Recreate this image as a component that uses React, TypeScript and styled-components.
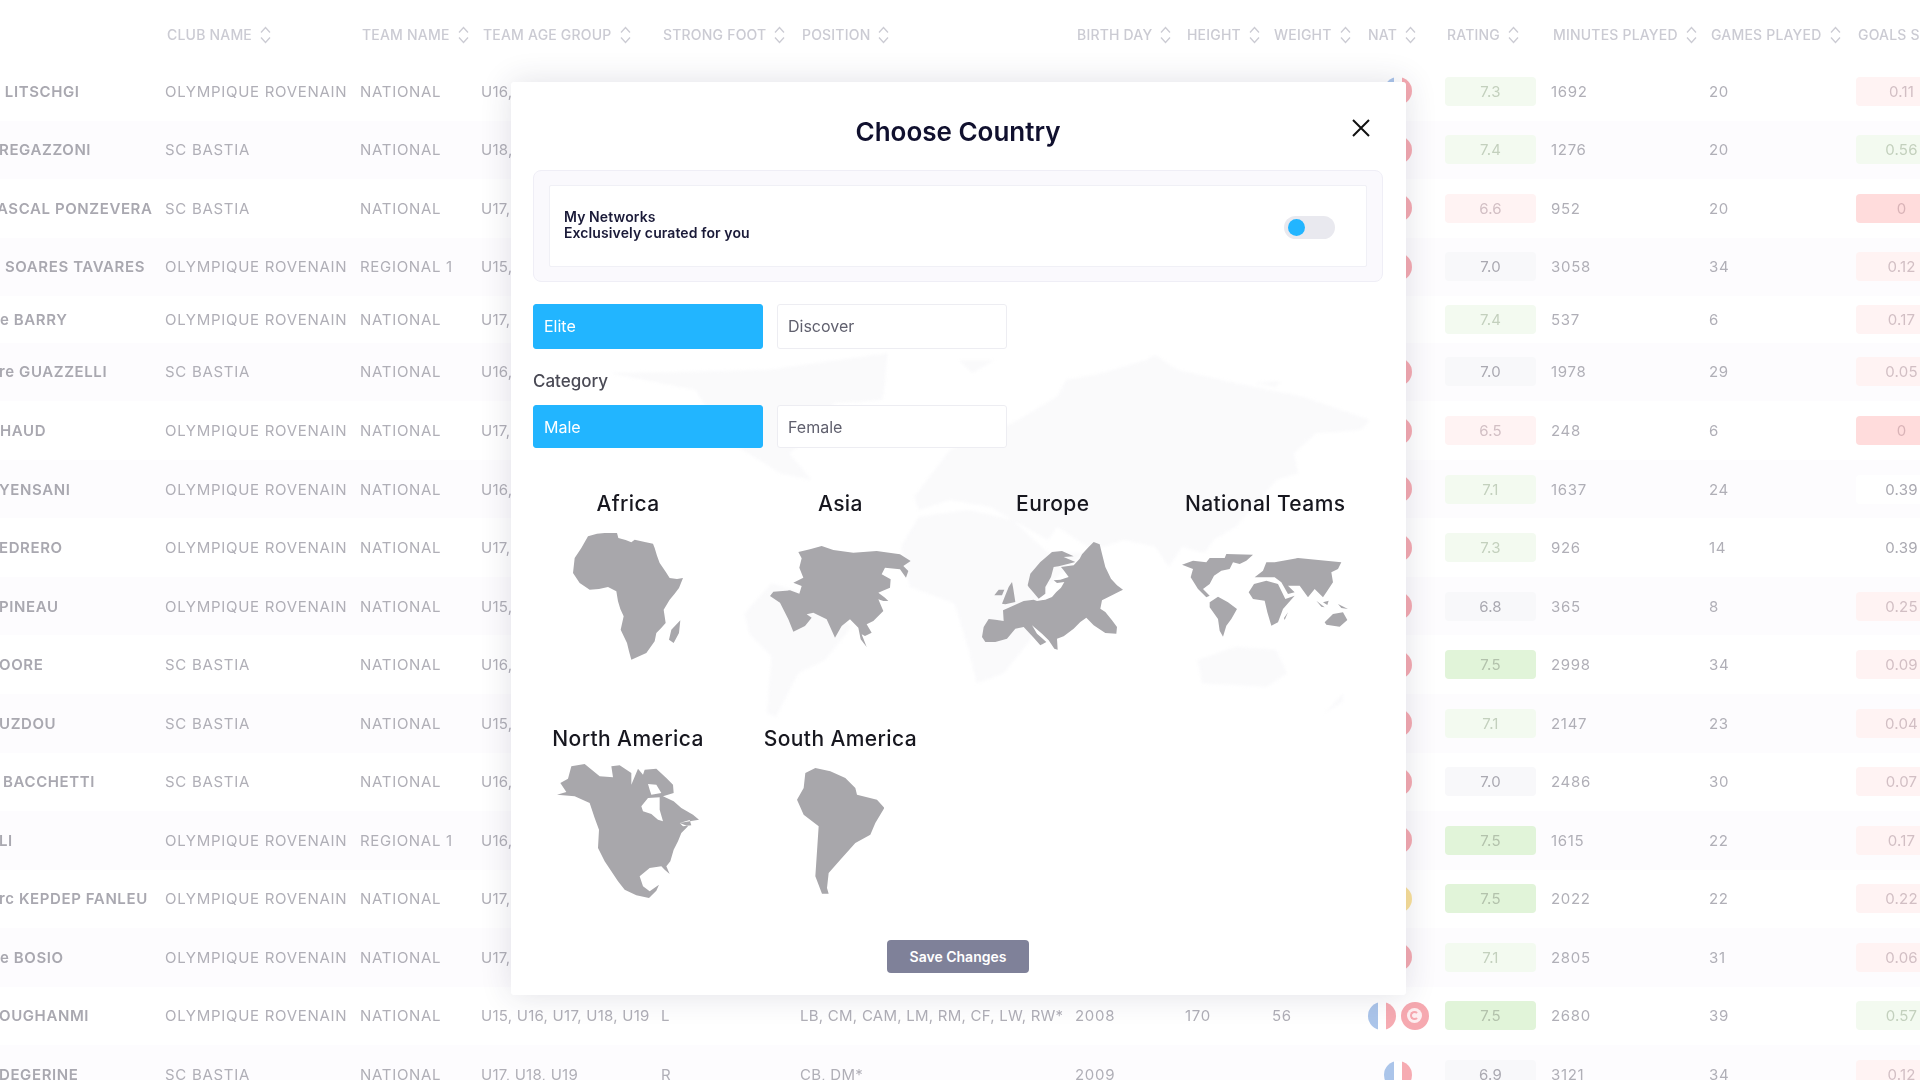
import React from "react";
import styled, { createGlobalStyle } from "styled-components";

const Global = createGlobalStyle`
  html, body { margin: 0; padding: 0; background: #fff; }
  body { font-family: Inter, "Noto Sans", "Liberation Sans", sans-serif; }
`;

const Page = styled.div`
  position: relative;
  width: 1920px;
  height: 1080px;
  overflow: hidden;
  background: #fff;
`;

const Table = styled.div`
  width: 1920px;
  filter: blur(0.5px);
`;

const columns = "165px 195px 121px 180px 139px 275px 110px 87px 94px 79px 106px 158px 147px 64px";

const HeadRow = styled.div`
  display: grid;
  grid-template-columns: ${columns};
  height: 62px;
  padding-top: 25.5px;
  box-sizing: border-box;
`;

const HeadCell = styled.div`
  display: flex;
  align-items: flex-start;
  gap: 7px;
  padding-left: 2px;
  font-size: 14px;
  letter-spacing: 0.2px;
  line-height: 18px;
  font-weight: 500;
  color: #cbcbd3;
  white-space: nowrap;
`;

const Row = styled.div<{ $short?: boolean; $even: boolean }>`
  display: grid;
  grid-template-columns: ${columns};
  align-items: center;
  height: ${(p) => (p.$short ? "46.5px" : "58.55px")};
  background: ${(p) => (p.$even ? "#fdfcfe" : "#ffffff")};
  font-size: 15px;
  letter-spacing: 0.7px;
  color: #b0afb7;
  white-space: nowrap;
`;

const NameCell = styled.div`
  overflow: hidden;
`;

const NameText = styled.span<{ $cut: number }>`
  display: block;
  margin-left: ${(p) => -p.$cut}px;
  font-weight: 600;
  letter-spacing: 0.6px;
  color: #a9a8b0;
`;

const Cell = styled.div`
  min-width: 0;
`;

const ListCell = styled.div`
  min-width: 0;
  letter-spacing: 0.25px;
`;

const Flags = styled.div`
  display: flex;
  justify-content: center;
  gap: 5px;
  width: 62px;
  margin-left: 1px;
`;

const Flag = styled.div<{ $kind: "fr" | "tn" | "cm" }>`
  display: flex;
  align-items: center;
  justify-content: center;
  width: 28px;
  height: 28px;
  border-radius: 50%;
  flex: none;
  background: ${(p) =>
    p.$kind === "fr"
      ? "linear-gradient(90deg,#abc5ea 0 36%,#fff 36% 66%,#f6abb2 66%)"
      : p.$kind === "tn"
      ? "#f6a9b0"
      : "linear-gradient(90deg,#a7d8b5 0 34%,#f4a9ae 34% 66%,#fbe29a 66%)"};
`;

const Emblem = styled.div`
  display: flex;
  align-items: center;
  justify-content: center;
  width: 15px;
  height: 15px;
  border-radius: 50%;
  background: #fdeef0;
`;

const Crescent = styled.div`
  width: 9px;
  height: 9px;
  border-radius: 50%;
  border: 2px solid #f6a9b0;
  border-right-color: transparent;
  box-sizing: border-box;
`;

const toneStyles: Record<string, [string, string]> = {
  g1: ["#f3faf0", "#c3d0bd"],
  g2: ["#e1f4d9", "#b3c2ac"],
  r1: ["#fff3f3", "#d2bfc4"],
  r2: ["#ffdcdc", "#d9b3b7"],
  n: ["#f8f8fa", "#aaa9b1"],
  w: ["#ffffff", "#aaa9b1"],
};

const Badge = styled.div<{ $tone: string }>`
  height: 29px;
  line-height: 29px;
  border-radius: 4px;
  text-align: center;
  width: 91px;
  letter-spacing: 0.2px;
  background: ${(p) => toneStyles[p.$tone][0]};
  color: ${(p) => toneStyles[p.$tone][1]};
`;

const Modal = styled.div`
  position: absolute;
  left: 511px;
  top: 82px;
  width: 895px;
  height: 913px;
  box-sizing: border-box;
  padding: 0 23px 0 22px;
  background: #fff;
  border-radius: 3px;
  box-shadow: 0 0 32px rgba(45, 45, 80, 0.14);
  color: #12122e;
  overflow: hidden;
`;

const Backdrop = styled.svg`
  position: absolute;
  left: 189px;
  top: 258px;
  width: 700px;
  height: 400px;
  overflow: visible;
  filter: blur(1.6px);
`;

const Content = styled.div`
  position: relative;
  display: flex;
  flex-direction: column;
  filter: blur(0.25px);
`;

const Title = styled.h1`
  margin: 0;
  height: 88px;
  line-height: 100px;
  text-align: center;
  font-size: 26px;
  font-weight: 600;
  color: #10102e;
`;

const Close = styled.button`
  position: absolute;
  right: 12px;
  top: 36px;
  width: 20px;
  height: 20px;
  padding: 0;
  border: 0;
  background: none;
  color: #111;
`;

const NetworkBox = styled.div`
  box-sizing: border-box;
  height: 112px;
  padding: 14px 15px;
  background: #faf9fd;
  border: 1px solid #efeef6;
  border-radius: 8px;
`;

const NetworkInner = styled.div`
  box-sizing: border-box;
  height: 82px;
  display: flex;
  align-items: center;
  justify-content: space-between;
  padding: 0 31px 0 14px;
  background: #fff;
  border: 1px solid #f0f0f6;
  border-radius: 2px;
`;

const NetworkText = styled.div`
  margin-bottom: 2px;
  font-size: 14px;
  letter-spacing: 0.1px;
  line-height: 16px;
  font-weight: 600;
  color: #1a1a38;
`;

const Toggle = styled.div`
  position: relative;
  width: 51px;
  height: 23px;
  margin-top: 3px;
  border-radius: 12px;
  background: #e9e9ef;
`;

const Knob = styled.div`
  position: absolute;
  left: 4px;
  top: 3px;
  width: 17px;
  height: 17px;
  border-radius: 50%;
  background: #22b5ff;
`;

const Choices = styled.div<{ $top: number }>`
  display: flex;
  gap: 14px;
  margin-top: ${(p) => p.$top}px;
`;

const Choice = styled.div<{ $active?: boolean; $h: number }>`
  box-sizing: border-box;
  width: 230px;
  height: ${(p) => p.$h}px;
  line-height: 42px;
  padding-left: 10px;
  font-size: 16px;
  border-radius: 3px;
  border: 1px solid ${(p) => (p.$active ? "#22b5ff" : "#ededf2")};
  background: ${(p) => (p.$active ? "#22b5ff" : "#fff")};
  color: ${(p) => (p.$active ? "#fff" : "#60606e")};
`;

const CategoryLabel = styled.div`
  margin-top: 21px;
  font-size: 17px;
  line-height: 22px;
  font-weight: 500;
  color: #4a4a55;
`;

const Regions = styled.div`
  display: grid;
  grid-template-columns: repeat(4, 190px);
  column-gap: 22.4px;
  row-gap: 49px;
  margin-top: 42px;
`;

const Region = styled.div`
  display: flex;
  flex-direction: column;
  align-items: center;
`;

const RegionLabel = styled.div`
  height: 26px;
  line-height: 28px;
  font-size: 21px;
  letter-spacing: 0.4px;
  font-weight: 500;
  color: #17171f;
  white-space: nowrap;
`;

const MapBox = styled.div`
  height: 160px;
  display: flex;
  align-items: center;
  justify-content: center;
`;

const Save = styled.button`
  align-self: center;
  width: 142px;
  height: 33px;
  margin-top: 29px;
  border: 0;
  border-radius: 4px;
  background: #7f8199;
  color: #fff;
  font-family: inherit;
  font-size: 14px;
  font-weight: 600;
`;

const SortIcon = () => (
  <svg width="13" height="18" viewBox="0 0 13 18" fill="none" stroke="#cbcbd3" strokeWidth="1.3">
    <path d="M2 6.5 6.5 1.5 11 6.5M2 11.5 6.5 16.5 11 11.5" />
  </svg>
);

const FILL = "#a8a7ab";

const AFRICA =
  "M205 200 232 192 255 190 292 190 296 205 318 211 335 218 345 210 372 216 400 222 405 235 412 258 420 280 436 303 450 325 472 328 490 325 478 355 465 372 450 390 432 420 438 460 424 476 410 490 405 515 380 550 335 570 328 545 322 520 303 480 312 440 302 418 295 395 290 365 265 352 238 358 210 360 180 340 160 310 165 265 185 235Z M482 452 478 490 462 520 448 510 455 480Z";
const ASIA =
  "M835 243 870 235 905 225 940 237 1000 245 1070 240 1140 250 1172 270 1150 285 1165 300 1158 320 1140 295 1095 290 1085 310 1112 325 1110 350 1075 365 1095 380 1105 390 1090 390 1075 385 1090 420 1060 450 1040 460 1055 485 1035 495 1025 490 1040 528 1022 505 1015 470 990 445 965 465 945 500 920 445 880 425 860 430 875 440 855 465 820 482 805 445 780 395 750 375 760 362 810 358 838 368 845 345 820 335 850 320 838 290 845 262Z";
const EUROPE =
  "M25 320 30 290 45 266 65 268 90 272 88 240 115 228 150 212 180 208 190 212 215 208 235 200 248 185 262 172 272 155 250 158 240 150 260 148 285 140 270 120 262 110 300 105 318 85 325 72 345 50 360 35 378 42 385 70 395 110 412 145 430 165 448 178 415 195 385 210 380 235 395 245 415 270 430 290 428 310 395 308 360 285 338 262 320 275 300 295 270 318 250 325 252 358 242 355 225 330 205 310 175 285 190 310 218 335 200 345 178 320 150 290 125 295 100 325 65 335 35 335Z M162 165 170 130 200 95 235 65 265 62 300 78 270 80 305 95 285 100 255 108 240 110 232 140 215 170 215 190 195 205 178 185 165 170Z M85 220 95 195 105 170 115 155 118 170 125 215 95 222Z M62 195 75 178 92 178 85 195Z";
const WORLD =
  "M22 62 55 50 95 55 105 42 150 42 155 30 235 32 215 50 195 60 175 55 165 75 140 80 118 95 105 120 85 135 105 155 95 160 70 135 48 100 55 75Z M105 175 130 158 160 175 187 195 170 225 155 245 145 278 135 260 130 225 105 190Z M222 145 238 120 275 110 310 120 332 165 360 155 325 195 310 235 290 245 278 205 270 170 235 165Z M240 100 265 80 275 55 300 55 370 42 500 55 490 75 470 85 475 115 445 160 420 135 400 160 375 125 340 125 360 145 340 150 320 115 300 100 275 100Z M450 235 475 210 505 205 518 228 495 248 455 242Z M340 205 330 228 328 222Z M425 170 450 190 440 188Z M445 175 462 170 458 183Z M490 180 520 195 500 192Z";
const NORTH =
  "M22 120 50 112 32 85 55 72 65 35 105 28 150 65 190 68 185 35 210 32 245 55 245 90 265 42 280 60 285 45 320 42 350 70 370 90 372 115 340 125 372 140 395 160 430 180 448 195 420 200 390 205 415 215 395 235 385 260 372 285 362 320 350 335 360 358 345 345 335 335 300 340 270 365 280 395 300 410 328 390 320 408 298 430 260 422 225 405 205 380 185 350 165 320 145 280 148 225 135 190 120 145 75 125Z M275 155 295 130 330 128 330 165 340 200 325 195 305 178 280 170Z M295 88 320 90 335 115 305 120 300 105Z M390 205 420 196 425 212 400 215Z";
const SOUTH =
  "M855 190 885 175 930 185 975 205 1005 235 1010 255 1070 270 1092 295 1065 340 1050 375 1005 400 960 450 925 490 920 535 925 552 905 552 885 500 895 350 850 315 830 270 850 235Z";

const BACKDROP =
  "M520 400 560 330 700 250 800 170 820 120 900 100 1000 60 1020 45 1070 90 1200 130 1350 170 1500 240 1480 270 1380 280 1330 340 1340 400 1290 420 1260 470 1200 560 1150 600 1130 640 1080 620 1050 680 1020 620 950 600 880 630 800 560 780 600 700 540 650 500 560 480 490 510 480 470Z M450 620 490 530 600 510 700 540 780 640 860 640 760 760 740 900 680 1000 620 1030 600 920 570 790 470 740Z M100 820 160 730 260 770 340 860 280 960 220 1000 170 1130 150 1120 160 950 110 880Z M-200 100 150 90 420 40 410 180 300 190 240 300 200 340 250 420 180 400 60 300 -10 150Z M580 60 660 60 610 100Z M1115 960 1200 920 1290 930 1315 1000 1270 1040 1125 1030Z M1400 1120 1440 1060 1440 1085Z M1240 130 1300 125 1290 140Z";

const regions: { label: string; d: string; box: [number, number, number, number] }[] = [
  { label: "Africa", d: AFRICA, box: [160, 187, 330, 383] },
  { label: "Asia", d: ASIA, box: [750, 225, 422, 303] },
  { label: "Europe", d: EUROPE, box: [25, 35, 423, 323] },
  { label: "National Teams", d: WORLD, box: [22, 30, 498, 250] },
  { label: "North America", d: NORTH, box: [22, 28, 426, 402] },
  { label: "South America", d: SOUTH, box: [830, 175, 262, 377] },
];

type R = {
  name: string; cut: number; club: string; team: string; age: string;
  foot?: string; pos?: string; birth?: string; h?: string; w?: string;
  flags: ("fr" | "tn" | "cm")[]; rating: string; rt: string; min: string; games: string; goals: string; gt: string;
};

const O = "OLYMPIQUE ROVENAIN";
const S = "SC BASTIA";
const N = "NATIONAL";
const rows: R[] = [
  { name: "e LITSCHGI", cut: 9, club: O, team: N, age: "U16,", flags: ["fr"], rating: "7.3", rt: "g1", min: "1692", games: "20", goals: "0.11", gt: "r1" },
  { name: "REGAZZONI", cut: 1, club: S, team: N, age: "U18,", flags: ["fr"], rating: "7.4", rt: "g1", min: "1276", games: "20", goals: "0.56", gt: "g1" },
  { name: "ASCAL PONZEVERA", cut: 3, club: S, team: N, age: "U17,", flags: ["fr"], rating: "6.6", rt: "r1", min: "952", games: "20", goals: "0", gt: "r2" },
  { name: "r SOARES TAVARES", cut: 6, club: O, team: "REGIONAL 1", age: "U15,", flags: ["fr"], rating: "7.0", rt: "n", min: "3058", games: "34", goals: "0.12", gt: "r1" },
  { name: "e BARRY", cut: 0, club: O, team: N, age: "U17,", flags: [], rating: "7.4", rt: "g1", min: "537", games: "6", goals: "0.17", gt: "r1" },
  { name: "re GUAZZELLI", cut: 1, club: S, team: N, age: "U16,", flags: ["fr"], rating: "7.0", rt: "n", min: "1978", games: "29", goals: "0.05", gt: "r1" },
  { name: "HAUD", cut: 0, club: O, team: N, age: "U17,", flags: ["fr"], rating: "6.5", rt: "r1", min: "248", games: "6", goals: "0", gt: "r2" },
  { name: "YENSANI", cut: 1, club: O, team: N, age: "U16,", flags: ["fr"], rating: "7.1", rt: "g1", min: "1637", games: "24", goals: "0.39", gt: "w" },
  { name: "EDRERO", cut: 1, club: O, team: N, age: "U17,", flags: ["fr"], rating: "7.3", rt: "g1", min: "926", games: "14", goals: "0.39", gt: "w" },
  { name: "PINEAU", cut: 1, club: O, team: N, age: "U15,", flags: ["fr"], rating: "6.8", rt: "n", min: "365", games: "8", goals: "0.25", gt: "r1" },
  { name: "OORE", cut: 1, club: S, team: N, age: "U16,", flags: ["fr"], rating: "7.5", rt: "g2", min: "2998", games: "34", goals: "0.09", gt: "r1" },
  { name: "UZDOU", cut: 1, club: S, team: N, age: "U15,", flags: ["fr"], rating: "7.1", rt: "g1", min: "2147", games: "23", goals: "0.04", gt: "r1" },
  { name: "o BACCHETTI", cut: 11, club: S, team: N, age: "U16,", flags: ["fr"], rating: "7.0", rt: "n", min: "2486", games: "30", goals: "0.07", gt: "r1" },
  { name: "LI", cut: 1, club: O, team: "REGIONAL 1", age: "U16,", flags: ["fr"], rating: "7.5", rt: "g2", min: "1615", games: "22", goals: "0.17", gt: "r1" },
  { name: "rc KEPDEP FANLEU", cut: 1, club: O, team: N, age: "U17,", flags: ["cm"], rating: "7.5", rt: "g2", min: "2022", games: "22", goals: "0.22", gt: "r1" },
  { name: "e BOSIO", cut: 0, club: O, team: N, age: "U17,", flags: ["fr"], rating: "7.1", rt: "g1", min: "2805", games: "31", goals: "0.06", gt: "r1" },
  { name: "OUGHANMI", cut: 1, club: O, team: N, age: "U15, U16, U17, U18, U19", foot: "L", pos: "LB, CM, CAM, LM, RM, CF, LW, RW*", birth: "2008", h: "170", w: "56", flags: ["fr", "tn"], rating: "7.5", rt: "g2", min: "2680", games: "39", goals: "0.57", gt: "g1" },
  { name: "DEGERINE", cut: 1, club: S, team: N, age: "U17, U18, U19", foot: "R", pos: "CB, DM*", birth: "2009", flags: ["fr"], rating: "6.9", rt: "n", min: "3121", games: "34", goals: "0.12", gt: "r1" },
];

const heads = ["", "CLUB NAME", "TEAM NAME", "TEAM AGE GROUP", "STRONG FOOT", "POSITION", "BIRTH DAY", "HEIGHT", "WEIGHT", "NAT", "RATING", "MINUTES PLAYED", "GAMES PLAYED", "GOALS SCORED"];

export default function App() {
  return (
    <Page>
      <Global />
      <Table>
        <HeadRow>
          {heads.map((h, i) => (
            <HeadCell key={i}>
              {h}
              {h && <SortIcon />}
            </HeadCell>
          ))}
        </HeadRow>
        {rows.map((r, i) => (
          <Row key={i} $even={i % 2 === 1} $short={r.flags.length === 0}>
            <NameCell>
              <NameText $cut={r.cut}>{r.name}</NameText>
            </NameCell>
            <Cell>{r.club}</Cell>
            <Cell>{r.team}</Cell>
            <ListCell>{r.age}</ListCell>
            <Cell>{r.foot}</Cell>
            <ListCell>{r.pos}</ListCell>
            <Cell>{r.birth}</Cell>
            <Cell>{r.h}</Cell>
            <Cell>{r.w}</Cell>
            <Flags>
              {r.flags.map((f, j) => (
                <Flag key={j} $kind={f}>
                  {f === "tn" && (
                    <Emblem>
                      <Crescent />
                    </Emblem>
                  )}
                </Flag>
              ))}
            </Flags>
            <Badge $tone={r.rt}>{r.rating}</Badge>
            <Cell>{r.min}</Cell>
            <Cell>{r.games}</Cell>
            <Badge $tone={r.gt}>{r.goals}</Badge>
          </Row>
        ))}
      </Table>
      <Modal>
        <Backdrop viewBox="0 0 1568 1200" preserveAspectRatio="none">
          <defs>
            <pattern id="dots" width="6.72" height="9" patternUnits="userSpaceOnUse">
              <rect width="4.5" height="6" fill="#f7f7f9" />
            </pattern>
          </defs>
          <path d={BACKDROP} fill="#fcfcfd" />
          <path d={BACKDROP} fill="url(#dots)" />
        </Backdrop>
        <Content>
          <Title>Choose Country</Title>
          <Close aria-label="Close">
            <svg width="20" height="20" viewBox="0 0 20 20" fill="none" stroke="#111" strokeWidth="2">
              <path d="M2 2 18 18M18 2 2 18" />
            </svg>
          </Close>
          <NetworkBox>
            <NetworkInner>
              <NetworkText>
                My Networks
                <br />
                Exclusively curated for you
              </NetworkText>
              <Toggle>
                <Knob />
              </Toggle>
            </NetworkInner>
          </NetworkBox>
          <Choices $top={22}>
            <Choice $h={45} $active>Elite</Choice>
            <Choice $h={45}>Discover</Choice>
          </Choices>
          <CategoryLabel>Category</CategoryLabel>
          <Choices $top={13}>
            <Choice $h={43} $active>Male</Choice>
            <Choice $h={43}>Female</Choice>
          </Choices>
          <Regions>
            {regions.map((reg) => (
              <Region key={reg.label}>
                <RegionLabel>{reg.label}</RegionLabel>
                <MapBox>
                  <svg
                    width={reg.box[2] / 3}
                    height={reg.box[3] / 3}
                    viewBox={reg.box.join(" ")}
                  >
                    <path d={reg.d} fill={FILL} fillRule="evenodd" />
                  </svg>
                </MapBox>
              </Region>
            ))}
          </Regions>
          <Save>Save Changes</Save>
        </Content>
      </Modal>
    </Page>
  );
}
